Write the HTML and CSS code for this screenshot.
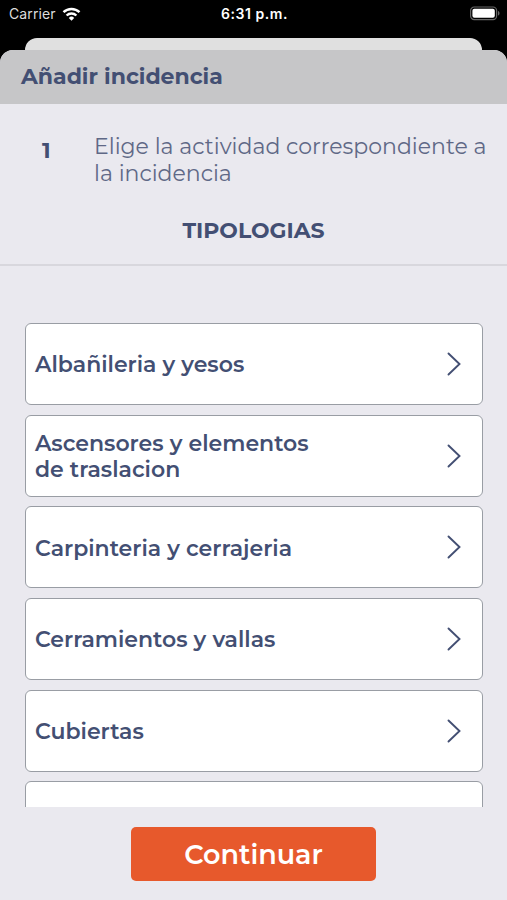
FILE: index.html
```html
<!DOCTYPE html>
<html lang="es">
<head>
  <meta charset="UTF-8">
  <meta name="viewport" content="width=device-width, initial-scale=1.0">
  <title>Añadir incidencia</title>
  <link rel="stylesheet" href="styles.css">
</head>
<body>
  <div class="status-bar">
    <div class="carrier">
      <span>Carrier</span>
      <svg width="19" height="14" viewBox="0 0 18 14" fill="none" stroke="#fff" stroke-width="2.4">
        <path d="M1 5.2a11.5 11.5 0 0 1 16 0"/>
        <path d="M4.1 8.5a7 7 0 0 1 9.8 0"/>
        <path d="M9 13.7L6.3 10.9a3.9 3.9 0 0 1 5.4 0z" fill="#fff" stroke="none"/>
      </svg>
    </div>
    <div class="time">6:31 p.m.</div>
    <div class="battery">
      <svg width="31" height="15" viewBox="0 0 31 15">
        <rect x="1.6" y="1" width="26" height="12.6" rx="3.6" fill="none" stroke="#666" stroke-width="1.2"/>
        <rect x="3.4" y="2.8" width="22.4" height="9" rx="2" fill="#fff"/>
        <path d="M29 5v4.6c2-.6 2-4 0-4.6z" fill="#666"/>
      </svg>
    </div>
  </div>

  <div class="back-sheet"></div>

  <div class="sheet">
    <h1>Añadir incidencia</h1>

    <div class="step">
      <span class="step-number">1</span>
      <p>Elige la actividad correspondiente a la incidencia</p>
    </div>
    <h2>TIPOLOGIAS</h2>

    <div class="list">
      <div class="item">
        <span>Albañileria y yesos</span>
        <svg class="arrow" viewBox="0 0 14 24"><path d="M1.5 1.5L12.5 12L1.5 22.5"/></svg>
      </div>
      <div class="item">
        <span>Ascensores y elementos<br>de traslacion</span>
        <svg class="arrow" viewBox="0 0 14 24"><path d="M1.5 1.5L12.5 12L1.5 22.5"/></svg>
      </div>
      <div class="item">
        <span>Carpinteria y cerrajeria</span>
        <svg class="arrow" viewBox="0 0 14 24"><path d="M1.5 1.5L12.5 12L1.5 22.5"/></svg>
      </div>
      <div class="item">
        <span>Cerramientos y vallas</span>
        <svg class="arrow" viewBox="0 0 14 24"><path d="M1.5 1.5L12.5 12L1.5 22.5"/></svg>
      </div>
      <div class="item">
        <span>Cubiertas</span>
        <svg class="arrow" viewBox="0 0 14 24"><path d="M1.5 1.5L12.5 12L1.5 22.5"/></svg>
      </div>
      <div class="item"></div>
    </div>

    <div class="footer">
      <button>Continuar</button>
    </div>
  </div>
</body>
</html>
```
FILE: styles.css
```css
* {
  box-sizing: border-box;
}
body {
  font-family: Montserrat, Inter, sans-serif;
  margin: 0;
  height: 900px;
  overflow: hidden;
  background: #000;
  color: #434f73;
  display: flex;
  flex-direction: column;
}
.status-bar {
  height: 38px;
  padding: 0 7px 11px 9px;
  display: grid;
  grid-template-columns: 1fr auto 1fr;
  align-items: center;
  color: #fff;
  font-family: Inter, sans-serif;
  font-size: 14px;
}
.carrier {
  display: flex;
  align-items: center;
  gap: 6px;
  color: #ddd;
  letter-spacing: 0.1px;
}
.time {
  font-weight: 600;
  letter-spacing: 0.55px;
}
.battery {
  display: flex;
  justify-content: flex-end;
}
.back-sheet {
  height: 12px;
  margin: 0 25px;
  background: #e0e0e0;
  border-radius: 12px 12px 0 0;
}
.sheet {
  flex: 1;
  min-height: 0;
  display: flex;
  flex-direction: column;
  background: #eae9ef;
  border-radius: 13px 13px 0 0;
  overflow: hidden;
}
h1 {
  margin: 0;
  height: 54px;
  padding-left: 21px;
  background: #c6c6c8;
  font-size: 22px;
  font-weight: 700;
  line-height: 54px;
  letter-spacing: -0.03px;
}
.step {
  display: flex;
  padding: 30px 0 0 42px;
  height: 112px;
}
.step-number {
  width: 52px;
  font-size: 22px;
  font-weight: 700;
  line-height: 33px;
}
.step p {
  margin: 0;
  width: 400px;
  font-size: 22px;
  line-height: 26.5px;
  color: #5f6886;
}
h2 {
  margin: 0;
  height: 50px;
  border-bottom: 2px solid #d8d7dd;
  text-align: center;
  font-size: 22px;
  font-weight: 700;
  line-height: 30px;
}
.list {
  margin-top: 57px;
  height: 484px;
  padding: 0 24px 0 25px;
  overflow: hidden;
  display: flex;
  flex-direction: column;
  gap: 9.7px;
}
.item {
  flex: none;
  height: 82px;
  padding: 0 21px 0 9px;
  display: flex;
  align-items: center;
  justify-content: space-between;
  background: #fff;
  border: 1.5px solid #999da4;
  border-radius: 6px;
  font-size: 22px;
  font-weight: 600;
  line-height: 26.4px;
}
.item span {
  padding-top: 3px;
}
.arrow {
  width: 14px;
  height: 24px;
  fill: none;
  stroke: #434f73;
  stroke-width: 1.9;
  stroke-linecap: round;
}
.footer {
  padding-top: 20px;
  text-align: center;
}
button {
  width: 245px;
  height: 54px;
  padding: 0;
  background: #e7592c;
  color: #fff;
  border: none;
  border-radius: 5px;
  font-family: inherit;
  font-size: 27px;
  font-weight: 600;
}
```
